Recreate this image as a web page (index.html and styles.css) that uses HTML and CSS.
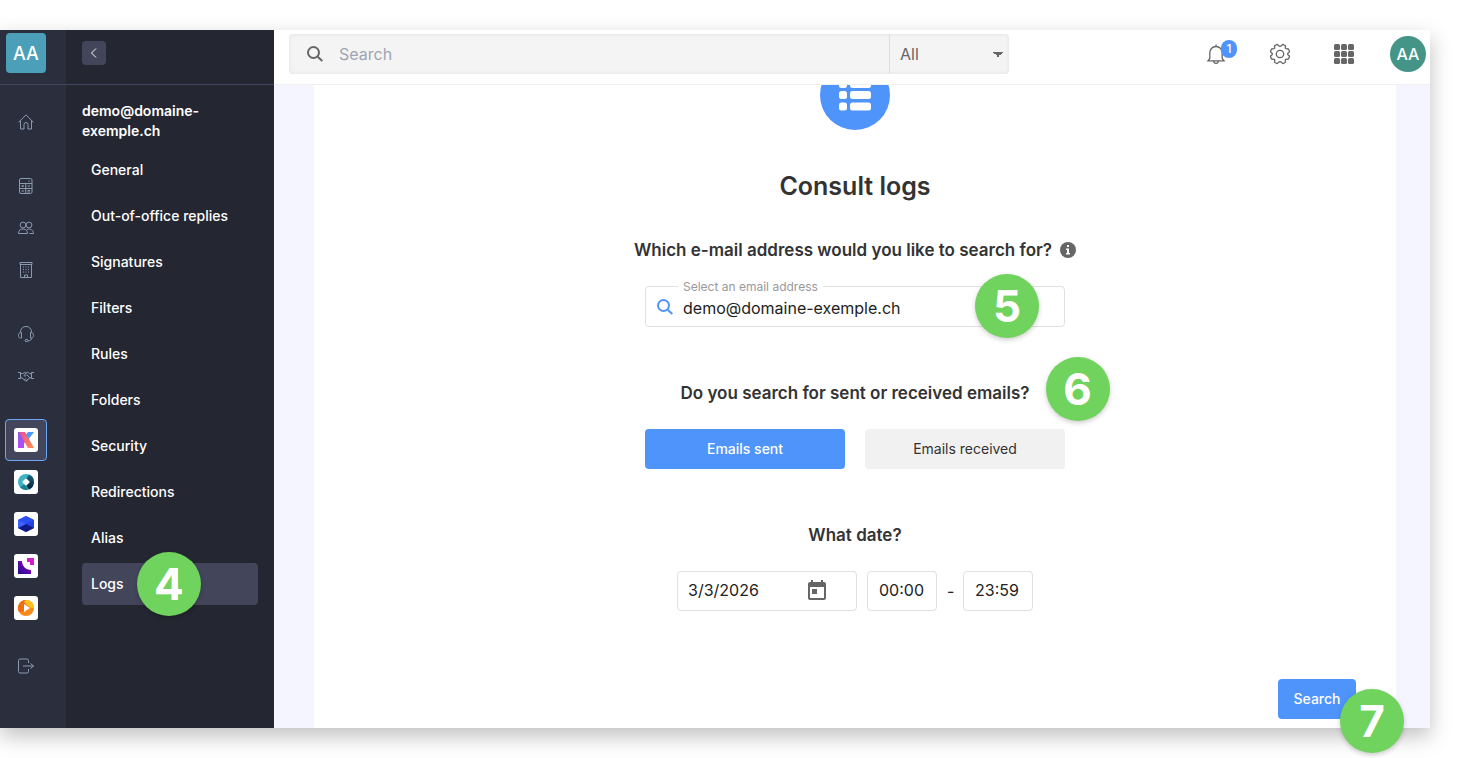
FILE: index.html
```html
<!DOCTYPE html>
<html lang="en">
<head>
    <meta charset="UTF-8">
    <meta name="viewport" content="width=device-width, initial-scale=1.0">
    <title>Consult logs</title>
    <link rel="stylesheet" href="styles.css">
</head>
<body>
    <div class="app">
        <nav class="rail" aria-label="Products">
            <div class="rail-head"><a class="org" href="#">AA</a></div>
            <div class="rail-body">
                <div class="rail-group">
                    <a class="rail-item" href="#" aria-label="Home">
                        <svg class="line-icon" viewBox="0 0 16 16"><path d="M.5 8.400 8 .9l7.500 7.500M2.500 6.800v8.200h3.500v-4.500a2 2 0 0 1 4 0v4.500h3.500V6.800"/></svg>
                    </a>
                </div>
                <div class="rail-group">
                    <a class="rail-item" href="#" aria-label="Accounting">
                        <svg class="line-icon" viewBox="0 0 16 16"><rect x="1.500" y=".5" width="12.500" height="15" rx="1.500"/><path d="M1.500 5.500H14M7.750 5.500v10M1.500 10.500H14M3.500 8h2.500M4.750 7v2M9.500 8H12M3.500 13h2.500M9.500 12.500H12M9.500 14H12M11 2.500v1.300"/></svg>
                    </a>
                    <a class="rail-item" href="#" aria-label="Users">
                        <svg class="line-icon" viewBox="0 0 16 16"><circle cx="5" cy="5" r="2.900"/><circle cx="11" cy="5" r="2.900"/><path d="M.5 13.500c0-3 1.700-4.500 4.500-4.500s4.500 1.500 4.500 4.500zM9 9.500c3.500-1.200 6.500.5 6.500 4h-4"/></svg>
                    </a>
                    <a class="rail-item" href="#" aria-label="Organisation">
                        <svg class="line-icon" viewBox="0 0 16 16"><path d="M2 .5h12v2H2zM2.500 2.500h11v13h-11zM6.500 15.500v-2.500h3v2.500M5 5h1M7.500 5h1M10 5h1M5 7.500h1M7.500 7.500h1M10 7.500h1M5 10h1M7.500 10h1M10 10h1"/></svg>
                    </a>
                </div>
                <div class="rail-group">
                    <a class="rail-item" href="#" aria-label="Support">
                        <svg class="line-icon" viewBox="0 0 16 16"><path d="M2.500 6.500C2.500 2.500 5 .5 8 .5s5.500 2 5.500 6M3.500 6.500v5.500H2.500c-1.500 0-2-1-2-2.700s.8-2.800 3-2.800zM12.500 6.500v5.500h1c1.500 0 2-1 2-2.700s-.8-2.800-3-2.800zM13.500 12c0 2-1 2.800-3.500 2.800"/><rect x="7" y="13.500" width="3" height="2" rx="1"/></svg>
                    </a>
                    <a class="rail-item" href="#" aria-label="Partners">
                        <svg class="line-icon" viewBox="0 0 16 16"><path d="M0 4.500h2.500v6H0M16 4.500h-2.500v6H16M2.500 5.500h2.200l2-1 1.300.5 1.500-.7 2 1.200h2M2.500 9.800h1.500l3.300 3 1 .2 3.500-3.200h1.700M8 5 6 7.500c1 1 2 .5 2.800-.7L12 9.800M6.500 12l1.500-1.700M8 13l1.800-1.700"/></svg>
                    </a>
                </div>
                <div class="rail-group rail-apps">
                    <a class="rail-item active" href="#" aria-label="kSuite">
                        <svg class="app-icon" viewBox="0 0 24 24">
                            <defs>
                                <linearGradient id="k1" x1="0" y1="0" x2="0" y2="1"><stop offset="0" stop-color="#8a5be8"/><stop offset="1" stop-color="#b44df5"/></linearGradient>
                                <linearGradient id="k2" x1="0" y1="0" x2="1" y2="1"><stop offset="0" stop-color="#e94f9c"/><stop offset="1" stop-color="#ff8f4e"/></linearGradient>
                            </defs>
                            <path d="M4 4h6v16H4z" fill="url(#k1)"/><path d="M14 4h6l-6 8-4-3z" fill="#4b9bfa"/><path d="m4 18 6-6 2 1-6 7H4z" fill="#b14bf7"/><path d="M5 4h6l9 16h-6z" fill="url(#k2)"/>
                        </svg>
                    </a>
                    <a class="rail-item" href="#" aria-label="Hosting">
                        <svg class="app-icon" viewBox="0 0 24 24">
                            <defs><linearGradient id="h1" x1="0" y1="0" x2="0" y2="1"><stop offset="0" stop-color="#17697c"/><stop offset="1" stop-color="#062038"/></linearGradient></defs>
                            <circle cx="12" cy="12" r="8" fill="#3fb3c6"/><path d="M15 4.600a8 8 0 0 1 0 14.800L12 15l3-3-3-3z" fill="url(#h1)"/><path d="M6 17.300 11 14l3 5.700a8 8 0 0 1-8-2.400z" fill="#1b8094"/><rect x="9.200" y="9.200" width="5.600" height="5.600" rx="1" transform="rotate(45 12 12)" fill="#fff"/>
                        </svg>
                    </a>
                    <a class="rail-item" href="#" aria-label="Cloud">
                        <svg class="app-icon" viewBox="0 0 24 24"><path d="m12 4 8 4v8l-8 4-8-4V8z" fill="#2342e8"/><path d="m12 4 8 4-8 4-8-4z" fill="#2b4ff5"/><path d="m4 16 8-4 8 4-8 4z" fill="#101a82"/><path d="m4 8 8 4-8 4z" fill="#3f62ff"/></svg>
                    </a>
                    <a class="rail-item" href="#" aria-label="Events">
                        <svg class="app-icon" viewBox="0 0 24 24">
                            <defs><linearGradient id="e1" x1="0" y1="1" x2="1" y2="0"><stop offset="0" stop-color="#2a0b91"/><stop offset=".5" stop-color="#5a0aa8"/><stop offset=".8" stop-color="#d414c5"/></linearGradient></defs>
                            <path d="M4 7h4c0 5 4 9 9 9v4H4z" fill="url(#e1)"/><path d="M13 4h7v7h-4V8h-3z" fill="#d51bd0"/>
                        </svg>
                    </a>
                    <a class="rail-item" href="#" aria-label="Streaming">
                        <svg class="app-icon" viewBox="0 0 24 24"><circle cx="12" cy="12" r="8" fill="#f98a1b"/><path d="M12 4a8 8 0 0 0-7 12l5-1V9l2-1z" fill="#ee6c12"/><path d="M12 4a8 8 0 0 1 8 8l-3 0-7-6z" fill="#ffc21c"/><path d="M10 8l6 4-6 4z" fill="#fff"/></svg>
                    </a>
                </div>
                <div class="rail-group">
                    <a class="rail-item" href="#" aria-label="Log out">
                        <svg class="line-icon" viewBox="0 0 16 16"><path d="M10.500 5V2.500a1.500 1.500 0 0 0-1.500-1.500H2A1.500 1.500 0 0 0 .5 2.500v11A1.500 1.500 0 0 0 2 15h7a1.500 1.500 0 0 0 1.500-1.500V11M5 8h10.500M12.500 5.500 15.500 8l-3 2.500"/></svg>
                    </a>
                </div>
            </div>
        </nav>

        <aside class="sidebar">
            <div class="sidebar-head">
                <button class="collapse" type="button" aria-label="Collapse menu">
                    <svg viewBox="0 0 12 12"><path d="M8 1.500 3.500 6 8 10.500"/></svg>
                </button>
            </div>
            <div class="sidebar-body">
                <p class="mailbox">demo@domaine-exemple.ch</p>
                <ul class="menu">
                    <li><a href="#">General</a></li>
                    <li><a href="#">Out-of-office replies</a></li>
                    <li><a href="#">Signatures</a></li>
                    <li><a href="#">Filters</a></li>
                    <li><a href="#">Rules</a></li>
                    <li><a href="#">Folders</a></li>
                    <li><a href="#">Security</a></li>
                    <li><a href="#">Redirections</a></li>
                    <li><a href="#">Alias</a></li>
                    <li><a class="active" href="#">Logs</a><span class="step step-menu">4</span></li>
                </ul>
            </div>
        </aside>

        <div class="main">
            <header class="topbar">
                <form class="search">
                    <svg class="search-icon" viewBox="0 0 16 16"><circle cx="6.500" cy="6.500" r="5.500"/><path d="m10.700 10.700 4.600 4.300"/></svg>
                    <input type="search" placeholder="Search" aria-label="Search">
                    <select aria-label="Search in">
                        <option>All</option>
                    </select>
                </form>
                <div class="tools">
                    <button type="button" aria-label="Notifications">
                        <svg viewBox="0 0 20 20"><path d="M10 .5v2M3.800 14.500V9C3.800 5.200 6.500 2.500 10 2.500S16.200 5.200 16.200 9v5.500l1.800 2.300H2zM7.500 17c.2 1.600 1.200 2.300 2.500 2.300s2.300-.7 2.500-2.300"/></svg>
                        <span class="count">1</span>
                    </button>
                    <button type="button" aria-label="Settings">
                        <svg viewBox="0 0 20 20"><circle cx="10" cy="10" r="3.700"/><path d="M10 2.400C11.500 2.400 11.800.4 13 .5l2.100 1c.9.700-.2 2.200.3 2.900.7.900 2.600-.1 3.100.7l1 2.400c.1 1.100-1.900 1.100-1.900 2.500s2 1.400 1.900 2.500l-1 2.400c-.5.8-2.400-.2-3.100.7-.5.700.6 2.200-.3 2.900l-2.100 1c-1.200.1-1.500-1.900-3-1.900s-1.800 2-3 1.900l-2.100-1c-.9-.7.200-2.200-.3-2.900-.7-.9-2.600.1-3.100-.7l-1-2.400c-.1-1.100 1.900-1.100 1.900-2.500S.4 8.600.5 7.500l1-2.400c.5-.8 2.400.2 3.100-.7.5-.7-.6-2.200.3-2.900l2.100-1c1.200-.1 1.500 1.900 3 1.900z"/></svg>
                    </button>
                    <button type="button" aria-label="Applications">
                        <svg class="solid" viewBox="0 0 20 20"><rect width="6" height="6" rx="1.500"/><rect x="7" width="6" height="6" rx="1.500"/><rect x="14" width="6" height="6" rx="1.500"/><rect y="7" width="6" height="6" rx="1.500"/><rect x="7" y="7" width="6" height="6" rx="1.500"/><rect x="14" y="7" width="6" height="6" rx="1.500"/><rect y="14" width="6" height="6" rx="1.500"/><rect x="7" y="14" width="6" height="6" rx="1.500"/><rect x="14" y="14" width="6" height="6" rx="1.500"/></svg>
                    </button>
                    <button class="avatar" type="button">AA</button>
                </div>
            </header>

            <main class="content">
                <form class="card">
                    <div class="hero">
                        <svg viewBox="0 0 32 32"><rect y="1" width="8" height="8" rx="2.500"/><rect x="11" y="1" width="21" height="8" rx="2.500"/><rect y="12" width="8" height="8" rx="2.500"/><rect x="11" y="12" width="21" height="8" rx="2.500"/><rect y="23.500" width="8" height="8" rx="2.500"/><rect x="11" y="23.500" width="21" height="8" rx="2.500"/></svg>
                    </div>
                    <h1>Consult logs</h1>

                    <h2>
                        Which e-mail address would you like to search for?
                        <svg class="info" viewBox="0 0 16 16"><circle cx="8" cy="8" r="8"/><path d="M7 3h2v2H7zM6 6.500h3V11h1v1.500H6V11h1V8H6z" fill="#fff"/></svg>
                    </h2>
                    <div class="field">
                        <label for="email">Select an email address</label>
                        <svg class="search-icon" viewBox="0 0 16 16"><circle cx="6.500" cy="6.500" r="5.500"/><path d="m10.700 10.700 4.600 4.300"/></svg>
                        <input id="email" type="text" value="demo@domaine-exemple.ch">
                        <span class="step step-email">5</span>
                    </div>

                    <h2>
                        Do you search for sent or received emails?
                        <span class="step step-type">6</span>
                    </h2>
                    <div class="choices">
                        <button class="btn primary" type="button">Emails sent</button>
                        <button class="btn" type="button">Emails received</button>
                    </div>

                    <h2>What date?</h2>
                    <div class="dates">
                        <div class="date">
                            <input type="text" value="3/3/2026" aria-label="Date">
                            <button type="button" aria-label="Open calendar">
                                <svg viewBox="0 0 18 20"><path d="M16 2h-1V0h-2v2H5V0H3v2H2a2 2 0 0 0-2 2v14c0 1.100.9 2 2 2h14a2 2 0 0 0 2-2V4a2 2 0 0 0-2-2zm0 16H2V7h14zM4 9h5v5H4z"/></svg>
                            </button>
                        </div>
                        <input class="time" type="text" value="00:00" aria-label="From">
                        <span class="dash">-</span>
                        <input class="time" type="text" value="23:59" aria-label="To">
                    </div>

                    <div class="actions">
                        <button class="btn primary submit" type="button">Search</button>
                        <span class="step step-submit">7</span>
                    </div>
                </form>
            </main>
        </div>
    </div>
</body>
</html>
```

FILE: styles.css
```css
* {
    box-sizing: border-box;
}
body {
    margin: 0;
    padding: 30px 30px 30px 0;
    height: 100vh;
    overflow: hidden;
    background: #fff;
    color: #333;
    font-family: Inter, "Liberation Sans", sans-serif;
    font-size: 14px;
}
a {
    color: inherit;
    text-decoration: none;
}
button, input, select {
    font: inherit;
    color: inherit;
    margin: 0;
    border: none;
    outline: none;
    background: none;
}
button {
    padding: 0;
    cursor: pointer;
}
svg {
    display: block;
    overflow: visible;
}
.app {
    display: flex;
    height: 100%;
    box-shadow: 0 8px 20px rgba(0, 0, 0, 0.25);
}

/* product rail */
.rail {
    flex: 0 0 66px;
    background: #2b2e3d;
}
.rail-head {
    height: 55px;
    padding: 3px 6px;
    border-bottom: 1px solid #43455c;
}
.org {
    display: flex;
    align-items: center;
    justify-content: center;
    width: 40px;
    height: 40px;
    border-radius: 4px;
    background: #4b9fb8;
    color: #fff;
    font-size: 18px;
    font-weight: 500;
}
.rail-body {
    padding: 16px 0 0 5px;
}
.rail-group {
    margin-bottom: 22px;
}
.rail-apps {
    margin-bottom: 16px;
}
.rail-item {
    display: flex;
    align-items: center;
    justify-content: center;
    width: 42px;
    height: 42px;
    border: 1px solid transparent;
    border-radius: 4px;
}
.rail-item.active {
    background: #43455a;
    border-color: #68a6f5;
}
.line-icon {
    width: 16px;
    height: 16px;
    fill: none;
    stroke: #8a9bb0;
}
.app-icon {
    width: 24px;
    height: 24px;
    border-radius: 3px;
    background: #fff;
}

/* mailbox menu */
.sidebar {
    flex: 0 0 208px;
    background: #242631;
    color: #fff;
    font-weight: 500;
}
.sidebar-head {
    height: 55px;
    padding: 11px 16px;
    border-bottom: 1px solid #43455c;
}
.collapse {
    display: flex;
    align-items: center;
    justify-content: center;
    width: 24px;
    height: 24px;
    border-radius: 4px;
    background: #43455a;
}
.collapse svg {
    width: 12px;
    height: 12px;
    fill: none;
    stroke: #fff;
}
.sidebar-body {
    padding: 16px;
}
.mailbox {
    margin: 0 0 8px;
    width: 140px;
    line-height: 20px;
    font-weight: 600;
}
.menu {
    display: grid;
    gap: 4px;
    margin: 0;
    padding: 0;
    list-style: none;
}
.menu li {
    position: relative;
}
.menu a {
    display: block;
    padding: 0 9px;
    border-radius: 4px;
    line-height: 42px;
}
.menu a.active {
    background: #43455a;
}

/* top bar */
.main {
    flex: 1;
    display: flex;
    flex-direction: column;
    min-width: 0;
}
.topbar {
    position: relative;
    z-index: 1;
    display: flex;
    align-items: center;
    justify-content: space-between;
    height: 55px;
    padding: 0 4px 7px 15px;
    border-bottom: 1px solid #f0f0f0;
    background: #fff;
}
.search {
    display: flex;
    align-items: center;
    width: 720px;
    height: 40px;
    padding-left: 18px;
    border-radius: 4px;
    background: #f4f4f4;
    box-shadow: inset 0 0 4px rgba(0, 0, 0, 0.08);
    font-size: 16px;
}
.search-icon {
    flex: none;
    width: 16px;
    height: 16px;
    fill: none;
    stroke: #666;
    stroke-width: 2;
}
.search input {
    flex: 1;
    min-width: 0;
    padding: 0 16px;
}
.search input::placeholder {
    color: #9fa4b2;
    opacity: 1;
}
.search select {
    width: 120px;
    height: 40px;
    padding: 0 10px;
    border-left: 1px solid #ddd;
    appearance: none;
    color: #666;
    background: linear-gradient(to bottom right, #666 50%, transparent 50%) right 6px top 18px / 5px 5px no-repeat,
        linear-gradient(to bottom left, #666 50%, transparent 50%) right 11px top 18px / 5px 5px no-repeat;
}
.tools {
    display: flex;
    gap: 28px;
}
.tools button {
    position: relative;
    display: flex;
    align-items: center;
    justify-content: center;
    width: 36px;
    height: 36px;
}
.tools svg {
    width: 20px;
    height: 20px;
    fill: none;
    stroke: #666;
    stroke-width: 1.3;
}
.tools .solid {
    fill: #666;
    stroke: none;
}
.count {
    position: absolute;
    top: 4px;
    right: -3px;
    width: 16px;
    height: 18px;
    border-radius: 8px;
    background: #4f94fb;
    color: #fff;
    font-size: 12px;
    font-weight: 500;
    line-height: 18px;
}
.tools .avatar {
    border-radius: 50%;
    background: #449588;
    color: #fff;
    font-size: 16px;
    font-weight: 500;
}

/* log search form */
.content {
    flex: 1;
    display: flex;
    padding: 0 34px 0 40px;
    background: #f4f5fe;
}
.card {
    flex: 1;
    display: flex;
    flex-direction: column;
    align-items: center;
    background: #fff;
}
.hero {
    display: flex;
    align-items: center;
    justify-content: center;
    width: 70px;
    height: 70px;
    margin-top: -25px;
    border-radius: 50%;
    background: #4f94fb;
}
.hero svg {
    width: 32px;
    height: 32px;
    fill: #fff;
}
h1 {
    margin: 40px 0 36px;
    font-size: 25px;
    font-weight: 600;
    line-height: 32px;
}
h2 {
    position: relative;
    display: flex;
    align-items: center;
    gap: 8px;
    margin: 54px 0 24px;
    font-size: 17px;
    font-weight: 600;
    line-height: 24px;
}
h1 + h2 {
    margin-top: 0;
}
.info {
    width: 16px;
    height: 16px;
    fill: #666;
}
.field {
    position: relative;
    display: flex;
    align-items: center;
    width: 420px;
    height: 41px;
    padding: 0 11px;
    border: 1px solid #e0e0e0;
    border-radius: 4px;
    color: #222;
    font-size: 16px;
}
.field .search-icon {
    stroke: #4f94fb;
}
.field input {
    flex: 1;
    padding: 2px 10px 0;
}
.field label {
    position: absolute;
    top: -7px;
    left: 32px;
    padding: 0 5px;
    background: #fff;
    color: #999;
    font-size: 12px;
    line-height: 14px;
}
.choices {
    display: flex;
    gap: 20px;
}
.btn {
    width: 200px;
    height: 40px;
    padding-bottom: 2px;
    border-radius: 4px;
    background: #f1f1f1;
}
.btn.primary {
    background: #4f94fb;
    color: #fff;
    font-weight: 500;
}
.dates {
    display: flex;
    align-items: center;
    gap: 10px;
    color: #222;
    font-size: 16px;
}
.date, .time {
    height: 40px;
    padding: 0 11px 2px;
    border: 1px solid #e0e0e0;
    border-radius: 4px;
}
.date {
    display: flex;
    align-items: center;
    width: 180px;
    padding: 0 30px 2px 10px;
}
.date input {
    flex: 1;
    min-width: 0;
    padding: 0;
}
.date svg {
    width: 18px;
    height: 20px;
    fill: #666;
}
.time {
    width: 70px;
}
.dash {
    width: 6px;
}
.actions {
    position: relative;
    align-self: flex-end;
    margin: 68px 40px 0 0;
}
.btn.submit {
    width: 78px;
}

/* numbered steps */
.step {
    position: absolute;
    width: 64px;
    height: 64px;
    border-radius: 50%;
    background: #6fd35d;
    box-shadow: 0 2px 5px rgba(0, 0, 0, 0.2);
    color: #fff;
    font-size: 44px;
    font-weight: 700;
    line-height: 64px;
    text-align: center;
}
.step-menu {
    top: -11px;
    left: 55px;
}
.step-email {
    top: -13px;
    right: 25px;
}
.step-type {
    top: -24px;
    left: calc(100% + 16px);
}
.step-submit {
    top: 10px;
    right: -48px;
}
```
